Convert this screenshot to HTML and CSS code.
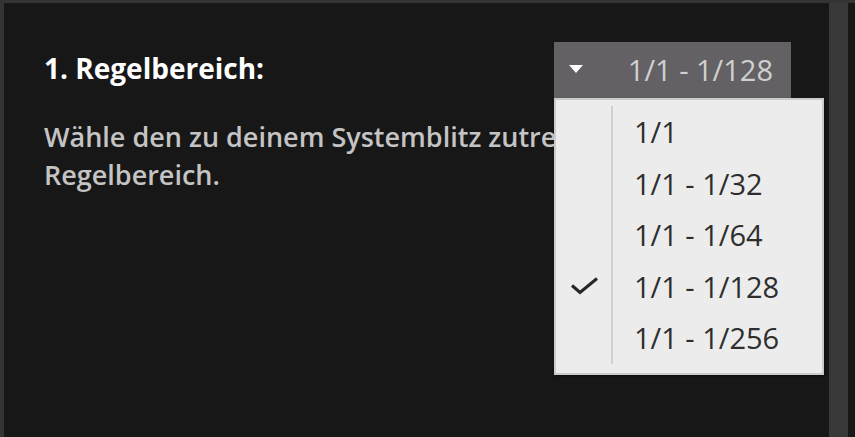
FILE: index.html
```html
<!DOCTYPE html>
<html lang="de">
<head>
<meta charset="utf-8">
<title>Regelbereich</title>
<link rel="stylesheet" href="styles.css">
</head>
<body>
<div class="window">
  <div class="panel">
    <div class="row">
      <h2 class="title">1. Regelbereich:</h2>
      <div class="select">
        <div class="select-btn">
          <span class="arrow"></span>
          <span class="value">1/1 - 1/128</span>
        </div>
        <ul class="menu">
          <li class="item"><span class="check"></span><span class="label">1/1</span></li>
          <li class="item"><span class="check"></span><span class="label">1/1 - 1/32</span></li>
          <li class="item"><span class="check"></span><span class="label">1/1 - 1/64</span></li>
          <li class="item selected"><span class="check"><svg class="tick" width="30" height="20" viewBox="0 0 30 20"><polyline points="2,8.5 10,15.5 27,1.5" fill="none" stroke="#262626" stroke-width="3"/></svg></span><span class="label">1/1 - 1/128</span></li>
          <li class="item"><span class="check"></span><span class="label">1/1 - 1/256</span></li>
        </ul>
      </div>
    </div>
    <p class="desc">Wähle den zu deinem Systemblitz zutreffenden Regelbereich.</p>
  </div>
  <div class="scrollbar"></div>
  <div class="edge"></div>
</div>
</body>
</html>
```

FILE: styles.css
```css
html, body {
  margin: 0;
  padding: 0;
  background: #171717;
}

body {
  font-family: "Open Sans", "Noto Sans", sans-serif;
}

.window {
  display: flex;
  height: 437px;
  box-sizing: border-box;
  border-top: 3px solid #343434;
  overflow: hidden;
}

.panel {
  flex: 1;
  border-left: 4px solid #343434;
  padding: 39px 38px 0 40px;
  background: #171717;
}

.row {
  display: flex;
  justify-content: space-between;
  align-items: flex-start;
  height: 56px;
}

.title {
  margin: 0;
  font-size: 28px;
  font-weight: 700;
  line-height: 52px;
  color: #ffffff;
}

.select {
  position: relative;
  width: 237px;
}

.select-btn {
  display: flex;
  align-items: center;
  justify-content: space-between;
  height: 56px;
  box-sizing: border-box;
  padding: 0 18px 0 15px;
  background: #636163;
}

.arrow {
  width: 0;
  height: 0;
  border-left: 7px solid transparent;
  border-right: 7px solid transparent;
  border-top: 8px solid #ffffff;
  margin-top: -2px;
}

.value {
  font-size: 29px;
  line-height: 56px;
  color: #d0d0d0;
}

.menu {
  position: absolute;
  top: 56px;
  left: 0;
  width: 270px;
  box-sizing: border-box;
  margin: 0;
  padding: 6px 0 9px;
  list-style: none;
  background: #ececec;
  border: 2px solid #cbcbcb;
  box-shadow: 1px 1px 2px rgba(0, 0, 0, 0.5);
  z-index: 2;
}

.item {
  display: grid;
  grid-template-columns: 57px 1fr;
  height: 51.5px;
}

.check {
  display: flex;
  align-items: center;
  justify-content: center;
  border-right: 2px solid #d0d0d0;
}

.tick {
  display: block;
  margin-left: 2px;
  margin-top: 2px;
}

.label {
  padding-left: 21px;
  font-size: 29px;
  line-height: 51.5px;
  color: #2e2e2e;
}

.desc {
  margin: 20px 0 0;
  font-size: 27px;
  font-weight: 600;
  line-height: 38px;
  color: #c4c4c4;
}

.scrollbar {
  width: 19px;
  background: #383838;
}

.edge {
  width: 7px;
  background: #171717;
}
```
